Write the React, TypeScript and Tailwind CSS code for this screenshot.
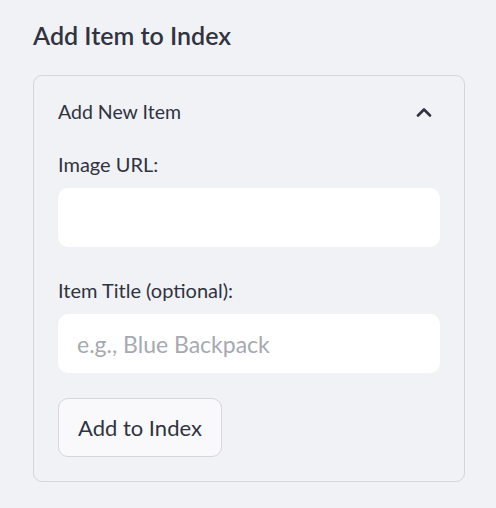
import { useState } from 'react'

const font = { fontFamily: '"Source Sans Pro", Lato, "Liberation Sans", sans-serif' }

function ChevronUp() {
  return (
    <svg width="16" height="10" viewBox="0 0 16 10" fill="none" className="text-[#31333f]">
      <path d="M2 8.5 L8 2.5 L14 8.5" stroke="currentColor" strokeWidth="2.6" strokeLinecap="round" strokeLinejoin="round" />
    </svg>
  )
}

function Field({ label, placeholder }: { label: string; placeholder?: string }) {
  const [value, setValue] = useState('')
  return (
    <div className="flex flex-col">
      <label className="h-[28px] flex items-center text-[20px] text-[#31333f] mb-[10px]">{label}</label>
      <input
        value={value}
        onChange={(e) => setValue(e.target.value)}
        placeholder={placeholder}
        className="h-[59px] w-full rounded-[10px] bg-white px-[19px] text-[23px] text-[#31333f] placeholder:text-[#a6a9b1] outline-none"
        style={font}
      />
    </div>
  )
}

export default function App() {
  const [open, setOpen] = useState(true)

  return (
    <div className="min-h-screen bg-[#f0f2f6] pl-[33px] pr-[31px] pt-[18px]" style={font}>
      <h3 className="text-[25px] leading-[34px] font-semibold text-[#31333f]">Add Item to Index</h3>

      <div className="mt-[23px] rounded-[9px] border border-[#d5d6da]">
        <button
          onClick={() => setOpen(!open)}
          className="w-full h-[71px] flex items-center justify-between pl-[24px] pr-[32px] text-[19.5px] text-[#31333f]"
        >
          <span>Add New Item</span>
          <ChevronUp />
        </button>

        {open && (
          <div className="px-[24px] pt-[3px] pb-[24px] flex flex-col">
            <Field label="Image URL:" />
            <div className="mt-[29px]">
              <Field label="Item Title (optional):" placeholder="e.g., Blue Backpack" />
            </div>
            <button className="mt-[25px] self-start h-[59px] px-[19px] rounded-[10px] border border-[#d5d6da] bg-[#f9f9fb] text-[22px] text-[#31333f]">
              Add to Index
            </button>
          </div>
        )}
      </div>
    </div>
  )
}
